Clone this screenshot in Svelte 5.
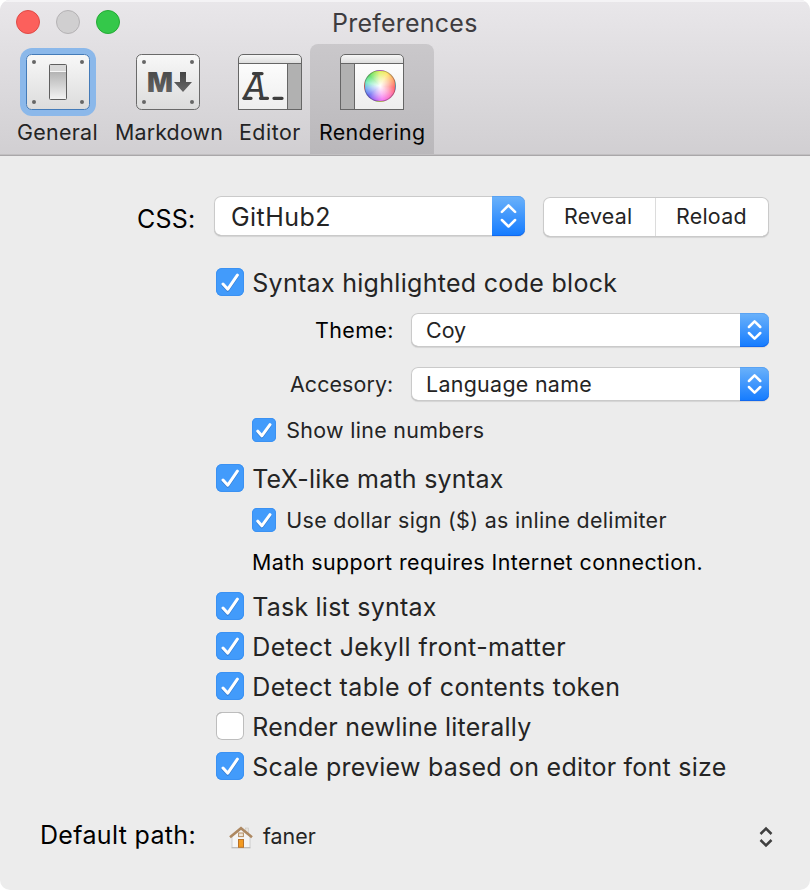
<script>
  const tabs = [
    { id: 'general', label: 'General', width: 96, inset: 7, ls: 0.3 },
    { id: 'markdown', label: 'Markdown', width: 124, inset: 9, ls: 0.16 },
    { id: 'editor', label: 'Editor', width: 80, inset: 9, ls: 0.5 },
    { id: 'rendering', label: 'Rendering', width: 124, inset: 9, ls: 0.34 }
  ];
  const active = 'rendering';
  const focused = 'general';

  let options = $state([
    { label: 'Task list syntax', on: true, ls: 0.222 },
    { label: 'Detect Jekyll front-matter', on: true, ls: 0.411 },
    { label: 'Detect table of contents token', on: true, ls: 0.4 },
    { label: 'Render newline literally', on: false, ls: 0.238 },
    { label: 'Scale preview based on editor font size', on: true, ls: 0.241 }
  ]);
</script>

{#snippet check(label, on, ls, small = false)}
  <div class="check" class:small>
    <span class="box" class:on>
      {#if on && small}
        <svg width="24" height="24" viewBox="0 0 24 24"><path d="M5.8 13.2 9.8 17.8 18 6.6" /></svg>
      {:else if on}
        <svg width="28" height="28" viewBox="0 0 28 28"><path d="M7 16 11.8 21.2 21.4 7.2" /></svg>
      {/if}
    </span>
    <span class="text" style="letter-spacing: {ls}px">{label}</span>
  </div>
{/snippet}

{#snippet popup(value, ls, small = false)}
  <div class="popup" class:small>
    <span class="value" style="letter-spacing: {ls}px">{value}</span>
    <span class="arrows">
      {#if small}
        <svg width="29" height="34" viewBox="0 0 29 34"><path d="M8.9 14 14.6 8.3 20.3 14M8.9 20 14.6 25.7 20.3 20" /></svg>
      {:else}
        <svg width="33" height="40" viewBox="0 0 33 40"><path d="M9.9 15.9 16.5 9.4 23.1 15.9M9.9 24 16.5 30.5 23.1 24" /></svg>
      {/if}
    </span>
  </div>
{/snippet}

<div class="window">
  <header>
    <div class="titlebar">
      <div class="lights"><i class="red"></i><i class="gray"></i><i class="green"></i></div>
      <h1>Preferences</h1>
    </div>
    <nav>
      {#each tabs as tab}
        <div class="tab" class:active={tab.id === active} style="width: {tab.width}px">
          <div class="icon" class:focused={tab.id === focused}>
            <svg width="64" height="56" viewBox="0 0 64 56">
              <defs>
                <linearGradient id="plate-{tab.id}" x2="0" y2="1"><stop stop-color="#f8f8f8" /><stop offset="1" stop-color="#dcdcdc" /></linearGradient>
                <linearGradient id="page-{tab.id}" x2="0" y2="1"><stop stop-color="#fff" /><stop offset="1" stop-color="#eee" /></linearGradient>
                <linearGradient id="ink-{tab.id}" x2="0" y2="1"><stop stop-color="#444" /><stop offset="1" stop-color="#686868" /></linearGradient>
                <linearGradient id="knob-{tab.id}" x2="0" y2="1"><stop stop-color="#a2a2a2" /><stop offset="1" stop-color="#f4f4f4" /></linearGradient>
              </defs>
              {#if tab.id === 'general' || tab.id === 'markdown'}
                <rect x=".5" y=".5" width="63" height="55" rx="5" fill="url(#plate-{tab.id})" stroke={tab.id === focused ? '#447bb8' : '#6a6a6a'} />
                {#each [8, 56] as x}
                  {#each [8, 48] as y}<circle cx={x} cy={y} r="2" fill="#666" />{/each}
                {/each}
              {/if}
              {#if tab.id === 'general'}
                <rect x="23.5" y="10.5" width="17" height="35" rx="1" fill="url(#knob-general)" />
                <rect x="24" y="11" width="16" height="6" fill="#d8d8d8" />
                <path d="M24 17.500h16" stroke="#f6f6f6" />
                <rect x="23.5" y="10.5" width="17" height="35" rx="1" fill="none" stroke="#5f5f5f" />
              {:else if tab.id === 'markdown'}
                <text x="10.900" y="38" font-family="Inter, sans-serif" font-weight="900" font-size="27.5" textLength="26" lengthAdjust="spacingAndGlyphs" fill="url(#ink-markdown)">M</text>
                <path d="M44 18h6v10h6L47 38 38 28h6z" fill="url(#ink-markdown)" />
              {:else}
                <path d="M.5 55.5V5A4.5 4.5 0 0 1 5 .5h54A4.5 4.5 0 0 1 63.5 5v50.5z" fill="url(#page-{tab.id})" />
                <path d="M.5 9.5V5A4.5 4.5 0 0 1 5 .5h54A4.5 4.5 0 0 1 63.5 5v4.5z" fill="url(#plate-{tab.id})" stroke="#666" />
                <rect x={tab.id === 'editor' ? 49.5 : 0.5} y="9.5" width="14" height="46" fill="#b1b1b1" stroke="#666" />
                <rect x=".5" y="9.5" width="63" height="46" fill="none" stroke="#666" />
                {#if tab.id === 'editor'}
                  <text x="6" y="45" font-family="Liberation Mono, monospace" font-style="italic" font-size="39" textLength="21.500" lengthAdjust="spacingAndGlyphs" fill="#3d3d3d">A</text>
                  <path d="M15.500 19.600h8.500M6 44.300h7M22.500 44.300h7M36 44.300h8" stroke="#3d3d3d" stroke-width="3.300" stroke-linecap="round" />
                {/if}
              {/if}
            </svg>
            {#if tab.id === 'rendering'}<span class="wheel"></span>{/if}
          </div>
          <span class="caption" style="margin-left: {tab.inset}px; letter-spacing: {tab.ls}px">{tab.label}</span>
        </div>
      {/each}
    </nav>
  </header>

  <main>
    <div class="row style-row">
      <span class="label large" style="letter-spacing: 0.2px">CSS:</span>
      {@render popup('GitHub2', 0.45)}
      <div class="segments">
        <span style="letter-spacing: 0.25px">Reveal</span>
        <span style="letter-spacing: 0.25px">Reload</span>
      </div>
    </div>

    <div class="group">
      {@render check('Syntax highlighted code block', true, 0.3)}
      <div class="field theme">
        <span class="label black" style="letter-spacing: 0.4px">Theme:</span>
        {@render popup('Coy', 0, true)}
      </div>
      <div class="field accessory">
        <span class="label" style="letter-spacing: 0.101px">Accesory:</span>
        {@render popup('Language name', 0.31, true)}
      </div>
      <div class="nested lines">{@render check('Show line numbers', true, 0.315, true)}</div>
    </div>

    <div class="group math">
      {@render check('TeX-like math syntax', true, 0.242)}
      <div class="nested dollar">{@render check('Use dollar sign ($) as inline delimiter', true, 0.335, true)}</div>
      <p>Math support requires Internet connection.</p>
    </div>

    <div class="group options">
      {#each options as o}
        {@render check(o.label, o.on, o.ls)}
      {/each}
    </div>

    <div class="path">
      <span class="label large" style="letter-spacing: 0.33px">Default path:</span>
      <div class="location">
        <svg class="house" width="26" height="24" viewBox="0 0 26 24">
          <rect x="17.6" y="3" width="3" height="6" fill="#e6e3df" stroke="#c9c5c0" stroke-width=".6" />
          <path d="M4 11.5 13 4l9 7.500V22.500H4z" fill="#f5f5f5" stroke="#c6c6c6" stroke-width=".8" />
          <path d="M3.500 22.800h19" stroke="#b5b5b5" />
          <path d="M2 12.300 13 3.200l11 9.100" fill="none" stroke="#ad8861" stroke-width="2.600" />
          <rect x="10.600" y="8" width="4.800" height="3.600" fill="#eee5d8" stroke="#b58d62" />
          <rect x="10.500" y="14.500" width="5" height="7.800" fill="#f39a20" stroke="#b9732a" />
        </svg>
        <span class="folder">faner</span>
        <svg class="stepper" width="16" height="24" viewBox="0 0 16 24"><path d="M2.500 9 8 3.500 13.500 9M2.500 15 8 20.500 13.500 15" /></svg>
      </div>
    </div>
  </main>
</div>

<style>
  :global(body) { margin: 0; background: #fff; }
  .window {
    width: 810px; height: 890px; box-sizing: border-box; overflow: hidden;
    display: flex; flex-direction: column;
    background: #ececec; border-radius: 10px;
    font: 21.4px/30px Inter, "Liberation Sans", sans-serif; color: #242424; white-space: nowrap;
  }
  svg { display: block; }

  header {
    height: 156px; box-sizing: border-box; flex: none;
    background: linear-gradient(#e9e7ea, #d1cfd2);
    border-bottom: 1px solid #a9a7a9;
    box-shadow: inset 0 2px #f4f3f5, inset 0 -1px #c1bfc1;
  }
  .titlebar { height: 44px; display: flex; }
  .lights { display: flex; gap: 16px; padding: 10px 0 0 16px; width: 315.5px; box-sizing: border-box; }
  .lights i { width: 24px; height: 24px; box-sizing: border-box; border-radius: 50%; border: 1px solid; }
  .red { background: #fc605c; border-color: #df4a46 !important; }
  .gray { background: #d0cfd0; border-color: #b4b2b4 !important; }
  .green { background: #34c84a; border-color: #24aa35 !important; }
  h1 { margin: 8px 0 0 16.500px; font-size: 25px; font-weight: 400; letter-spacing: 0.23px; color: #3e3c40; }

  nav { display: flex; padding-left: 10px; }
  .tab { height: 110px; display: flex; flex-direction: column; padding-top: 10px; box-sizing: border-box; border-radius: 8px 8px 0 0; }
  .tab.active { background: linear-gradient(#cac8cb, #bab8bb); color: #060606; }
  .icon { position: relative; align-self: center; width: 64px; height: 56px; }
  .focused { border-radius: 6px; box-shadow: 0 0 0 6px #8bb8ea; }
  .wheel {
    position: absolute; left: 24px; top: 16px; width: 32px; height: 32px; box-sizing: border-box; border-radius: 50%;
    border: 1px solid rgba(70, 50, 60, .4);
    background: radial-gradient(circle, #fff 0, rgba(255, 255, 255, .55) 40%, rgba(255, 255, 255, .12) 72%),
      conic-gradient(#d8ef45, #ffe050 30deg, #ff9a50 62deg, #ff4d4d 95deg, #ff58a8 130deg, #f35cf0 170deg, #a44ff2 200deg, #4d4df0 230deg, #5a9cf0 260deg, #5be6b0 285deg, #42dc4d 315deg, #d8ef45);
  }
  .caption { margin-top: 7px; }

  main { flex: 1; display: flex; flex-direction: column; padding-top: 40px; }
  .label { box-sizing: border-box; flex: none; }
  .large { font-size: 25px; color: #000; }
  .black { color: #000; }

  .row { display: flex; height: 41px; padding-left: 137px; }
  .row > .label { width: 77px; padding-top: 8px; }

  .popup {
    width: 311px; height: 40px; box-sizing: border-box; flex: none;
    display: flex; justify-content: space-between;
    background: #fff; border-radius: 7px; font-size: 25px;
    box-shadow: inset 0 0 0 1px #cacaca, inset 0 -1px #a9a9a9, 0 1px 1px rgba(0, 0, 0, .1);
  }
  .value { padding: 6px 0 0 17px; }
  .arrows { width: 33px; border-radius: 0 7px 7px 0; background: linear-gradient(#6bb2fa, #147bff); box-shadow: inset 0 1px #5aa3f3, inset 0 -1px #1168ee; }
  .arrows path { fill: none; stroke: #fff; stroke-width: 2.500; stroke-linecap: round; stroke-linejoin: round; }
  .popup.small { width: 358px; height: 34px; font-size: 21.4px; }
  .small .value { padding: 2px 0 0 15px; }
  .small .arrows { width: 29px; }

  .segments {
    display: flex; margin: 1px 0 0 18px; width: 226px; height: 40px; box-sizing: border-box;
    border-radius: 7px; background: #fff;
    box-shadow: inset 0 0 0 1px #cacaca, inset 0 -1px #a9a9a9, 0 1px 1px rgba(0, 0, 0, .1);
  }
  .segments span { width: 113px; box-sizing: border-box; padding: 3px 0 0 20px; margin: 1px 0; }
  .segments span:first-child { padding-left: 21px; border-right: 1px solid #dcdcdc; }

  .group { display: flex; flex-direction: column; margin-top: 31px; padding-left: 216px; }
  .group.math { margin-top: 22px; }
  .group.options { margin-top: 15px; gap: 12px; }

  .check { display: flex; height: 28px; font-size: 25px; }
  .box { width: 28px; height: 28px; flex: none; box-sizing: border-box; border-radius: 6px; background: #fff; box-shadow: inset 0 0 0 1px #bdbdbd, inset 0 1px #a5a5a5; }
  .box.on { background: #429bfb; box-shadow: inset 0 0 0 1px #3b91f2; }
  .box path { fill: none; stroke: #fff; stroke-width: 3; stroke-linecap: round; stroke-linejoin: round; filter: drop-shadow(0 1px 0.500px rgba(20, 70, 140, .4)); }
  .text { margin-left: 8.200px; }
  .check.small { height: 24px; font-size: 21.4px; }
  .small .box { width: 24px; height: 24px; border-radius: 5px; }
  .small .text { margin: -3px 0 0 10.300px; }

  .field { display: flex; }
  .field .label { width: 195px; padding-top: 2px; }
  .theme { margin-top: 17px; }
  .theme .label { padding-left: 99px; }
  .accessory { margin-top: 20px; }
  .accessory .label { padding-left: 74px; }
  .nested { padding-left: 36px; }
  .lines { margin-top: 17px; }
  .dollar { margin-top: 16px; }
  p { margin: 15px 0 0 36px; color: #000; letter-spacing: 0.433px; }

  .path { display: flex; margin-top: 40px; padding-left: 40px; }
  .path .label { width: 188px; }
  .location { display: flex; width: 546px; }
  .house { margin-top: 5px; }
  .folder { margin: 1px 0 0 9px; }
  .stepper { margin: 5px 0 0 auto; }
  .stepper path { fill: none; stroke: #3f3f3f; stroke-width: 2.500; }
</style>
